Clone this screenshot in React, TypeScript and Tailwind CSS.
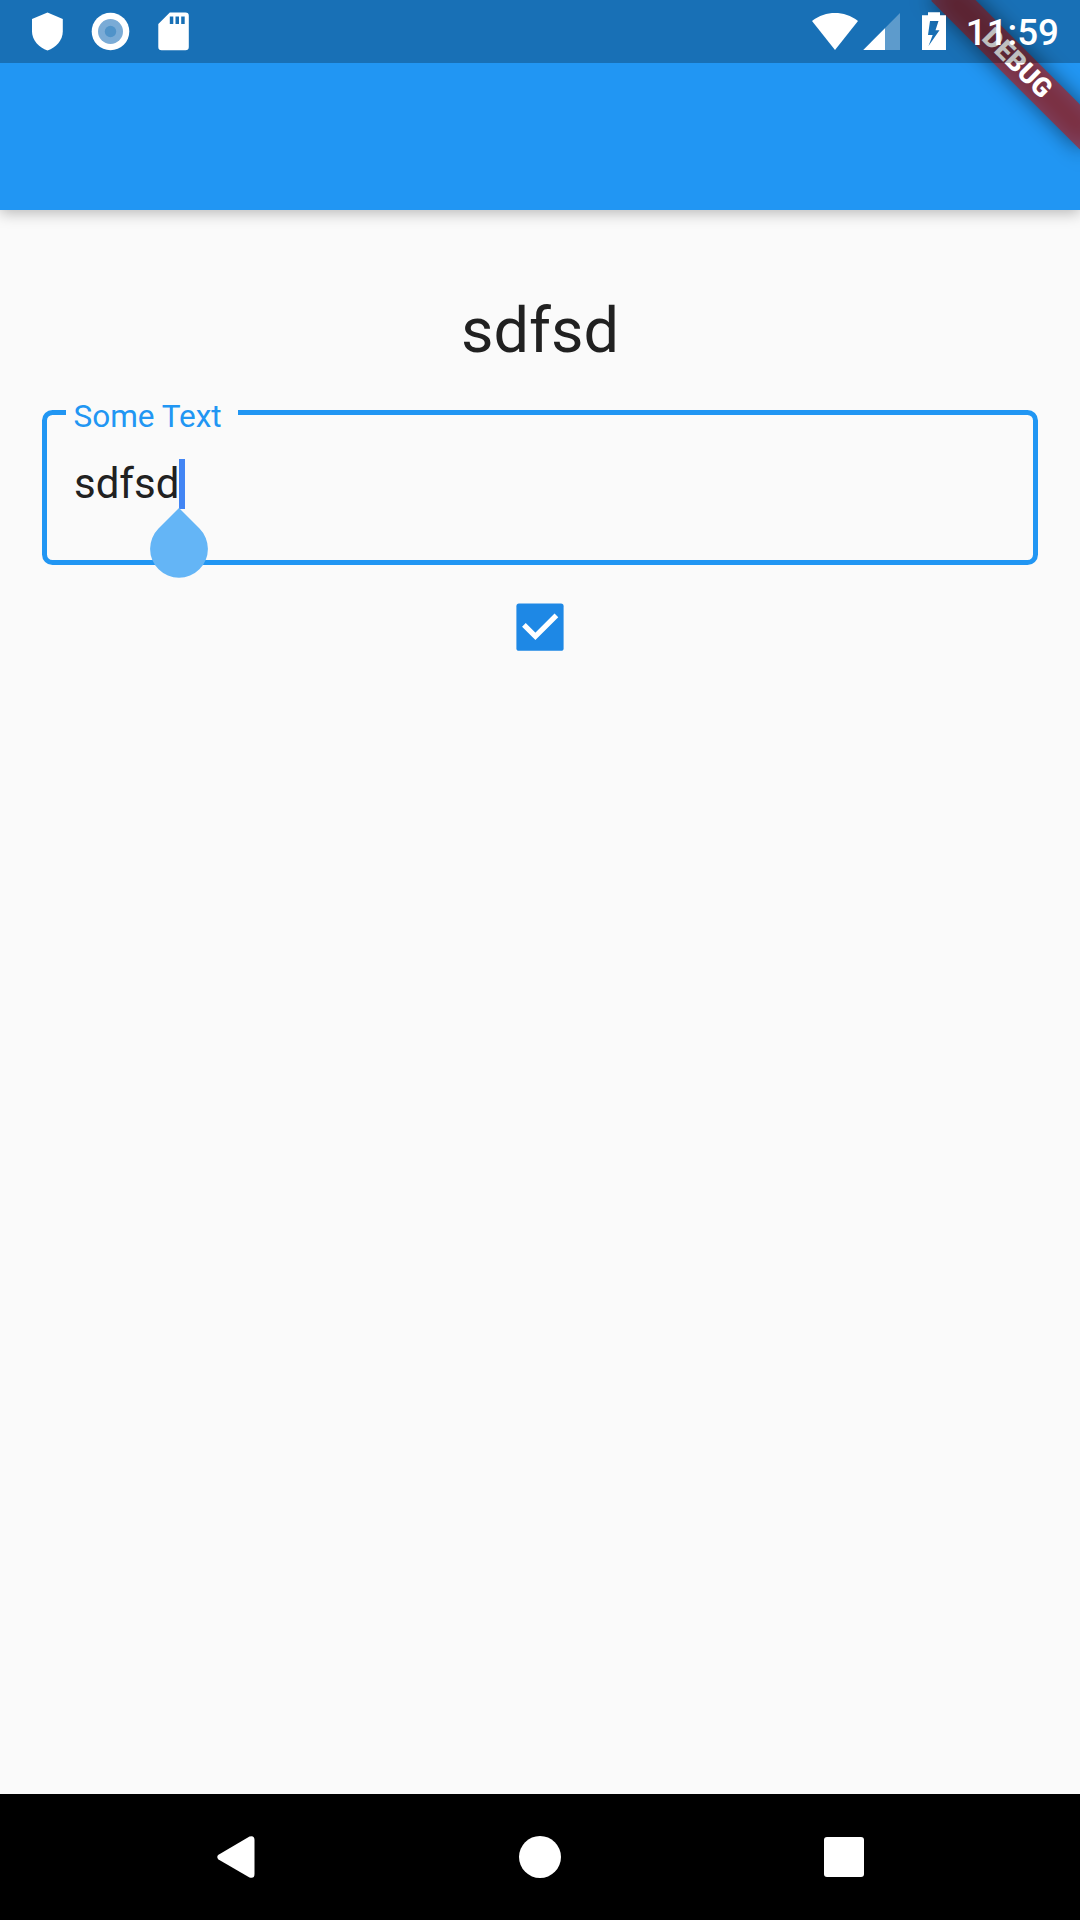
function StatusBar() {
  return (
    <div className="relative z-20 flex h-[63px] items-center bg-black/25 pl-8 pr-[21px] text-white">
      <svg className="h-[63px] w-[160px] shrink-0" viewBox="32 0 160 63" fill="currentColor">
        <path d="M47.5 12.5 62.8 19v12.5c0 8.400-6.800 16.400-15.300 18.900C39 47.900 32 39.900 32 31.500V19Z" />
        <circle cx="110.500" cy="31.500" r="18.800" />
        <circle cx="110.500" cy="31.500" r="12.500" fill="#7aabd6" />
        <circle cx="110.500" cy="31.500" r="5.700" fill="#5093c9" />
        <path
          fillRule="evenodd"
          d="M169.800 12.500H185.500a3.300 3.300 0 0 1 3.300 3.300V47a3.300 3.300 0 0 1-3.300 3.300H161.600a3.300 3.300 0 0 1-3.300-3.300V24ZM169.800 16.500V24h3.500v-7.500ZM175.500 16.500V24h3.500v-7.500ZM181.200 16.500V24h3.500v-7.500Z"
        />
      </svg>
      <svg className="ml-auto h-[63px] w-[136px] shrink-0" viewBox="812 0 136 63" fill="currentColor">
        <path d="M812 21C819 15.500 827 13 835 13s16 2.500 23 8L835 50Z" />
        <path d="M900 13V50H863.300Z" opacity=".3" />
        <path d="M885 28.200V50H863.300Z" />
        <path
          fillRule="evenodd"
          d="M928 12.300H940V15.300H946V50H922V15.300H928ZM930 21 928 35H932.700L928.500 46 939.500 30.200H935.500L938.500 21Z"
        />
      </svg>
      <span className="ml-[18px] pt-[2px] text-[36.750px] font-medium leading-[61px]">11:59</span>
    </div>
  );
}

function DebugBanner() {
  return (
    <div className="absolute left-[975px] top-[73.500px] h-[31.500px] w-[210px] origin-[105px_-73.500px] rotate-45">
      <div className="absolute inset-0 bg-black/50 blur-[10.400px]" />
      <div className="relative h-full bg-[#b71c1c]/63 text-center text-[26.775px] font-black leading-[31.500px] text-white">
        DEBUG
      </div>
    </div>
  );
}

function TextField() {
  return (
    <fieldset className="h-[175px] w-full rounded-[10.500px] border-[5px] border-[#2196f3] pl-[27px]">
      <legend className="-ml-[8px] w-[172px] pl-[7.500px] pt-[9px] text-[31.500px] leading-[36px] text-[#2196f3]">
        Some Text
      </legend>
      <div className="flex items-start pt-[24px]">
        <span className="text-[42px] leading-[49px] text-[#212121]">sdfsd</span>
        <span className="relative h-[50px] w-[5.500px] bg-[#4285f4]">
          <svg
            className="absolute left-[-29.500px] top-[49px] h-[70px] w-[58px]"
            viewBox="0 0 58 70"
            fill="#64b5f6"
          >
            <path d="M29 0 49.500 20.500A28.900 28.900 0 1 1 8.500 20.500Z" />
          </svg>
        </span>
      </div>
    </fieldset>
  );
}

export default function App() {
  return (
    <div className="relative flex h-[1920px] w-[1080px] flex-col overflow-hidden bg-[#fafafa] font-[Roboto,sans-serif]">
      <header className="h-[210px] shrink-0 bg-[#2196f3] shadow-[0_3px_14px_rgba(0,0,0,0.27)]">
        <StatusBar />
        <DebugBanner />
      </header>
      <main className="flex flex-1 flex-col items-center px-[42px] pt-[84px]">
        <h1 className="text-[63px] leading-[74px] text-[#212121]">sdfsd</h1>
        <div className="mt-[22px] w-full">
          <TextField />
        </div>
        <svg className="mt-[38px] size-[48px]" viewBox="0 0 48 48" fill="none">
          <rect x="0.400" y="0.600" width="47.200" height="47.200" rx="2.625" fill="#1e88e5" />
          <path d="M7.900 21.900 19.400 33.300 40.400 12.300" stroke="#fff" strokeWidth="5.250" />
        </svg>
      </main>
      <nav className="flex h-[126px] shrink-0 items-center justify-between bg-black pl-[217px] pr-[216px]">
        <svg className="h-[42px] w-[38px]" viewBox="0 0 38 42" fill="#fff">
          <path d="M1.500 18.800 32.500.5Q37.500-1 37.500 4V38Q37.500 43 32.500 41.500L1.500 23.500Q-1 21 1.500 18.800Z" />
        </svg>
        <div className="size-[42px] rounded-full bg-white" />
        <div className="size-[40px] rounded-[3px] bg-white" />
      </nav>
    </div>
  );
}
